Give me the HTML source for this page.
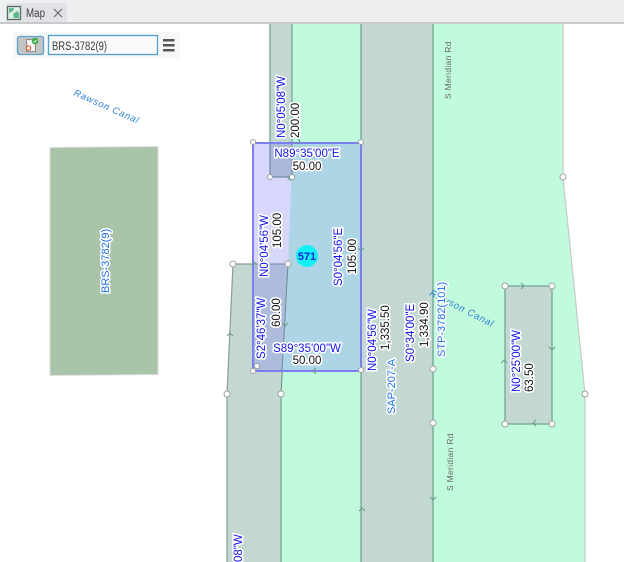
<!DOCTYPE html>
<html><head><meta charset="utf-8"><style>
html,body{margin:0;padding:0;background:#fff;width:624px;height:562px;overflow:hidden}
svg{display:block;filter:blur(.35px)}
text{font-family:"Liberation Sans",sans-serif}
.b{font-size:11.5px;fill:#1414f0;stroke:#fff;stroke-width:3.2px;paint-order:stroke;stroke-linejoin:round}
.k{font-size:11.5px;fill:#111;stroke:#fff;stroke-width:3.2px;paint-order:stroke;stroke-linejoin:round}
.c{font-size:11px;fill:#1f70ee;stroke:#fff;stroke-width:3px;paint-order:stroke;stroke-linejoin:round}
.r{font-size:9.500px;fill:#2f80d8;letter-spacing:.75px;font-style:italic}
.m{font-size:8.500px;fill:#666;letter-spacing:.3px}
.n{fill:#fff;stroke:#a0a0a0;stroke-width:1}
.a{fill:none;stroke:#5e9a84;stroke-width:.9}
</style></head><body>
<svg width="624" height="562" viewBox="0 0 624 562" xmlns="http://www.w3.org/2000/svg">
<rect width="624" height="562" fill="#fff"/>
<rect width="624" height="22" fill="#eeeff1"/>
<path d="M6 22V6q0-3 3-3h55q3 0 3 3v16z" fill="#e0e2e6"/>
<rect y="22" width="624" height="2" fill="#c9cacc"/>
<rect x="7.500" y="6.500" width="13" height="13" fill="#dcefe4" stroke="#5a6a6a" stroke-width="1.300"/>
<path d="M9 8h5l-1 3-4 2zM13 14l4-3 2 2v5h-5z" fill="#5fb98a"/>
<text x="26" y="17" style="font-size:11.500px;fill:#404040" textLength="19" lengthAdjust="spacingAndGlyphs">Map</text>
<path d="M54 9l8 8M62 9l-8 8" stroke="#666" stroke-width="1.100" fill="none"/>
<rect x="13" y="32" width="167" height="26" fill="#f6f7f7"/>
<rect x="17.500" y="36.500" width="26" height="18" rx="2" fill="#c4c4c4" stroke="#5ba3d0" stroke-width="1.300"/>
<path d="M26.500 39.500h9v12h-9z" fill="#f4f4f4" stroke="#777" stroke-width=".8"/>
<circle cx="35" cy="41" r="3.300" fill="#3fae49"/>
<path d="M33.500 41l1.200 1.200 1.800-2" stroke="#fff" fill="none" stroke-width=".8"/>
<circle cx="28.500" cy="48" r="2.200" fill="none" stroke="#d9603b" stroke-width="1.200"/>
<rect x="48.500" y="35.500" width="109" height="19" fill="#f8fafa" stroke="#4f9fd0" stroke-width="1.300"/>
<text x="52" y="50" style="font-size:11.500px;fill:#3a3a3a" textLength="55" lengthAdjust="spacingAndGlyphs">BRS-3782(9)</text>
<rect x="163" y="39" width="11.500" height="2.500" fill="#555"/><rect x="163" y="44" width="11.500" height="2.500" fill="#555"/><rect x="163" y="49" width="11.500" height="2.500" fill="#555"/>

<path d="M50 147.500L158 146.500V374.500L50 375.500Z" fill="#a9c4a9" stroke="#dcdcdc"/>
<path d="M292 24H563V177L585 394V562H281V394L288 264Z" fill="#c1fbdd"/>
<path d="M563 24V177L585 394V562" fill="none" stroke="#c8c8c8" stroke-width="1.200"/>
<rect x="270" y="24" width="22" height="153" fill="#c3d8d2"/>
<rect x="361" y="24" width="72" height="538" fill="#c3d8d2"/>
<path d="M233 264H288L281 394V562H227V394Z" fill="#c3d8d2"/>
<rect x="505" y="286" width="47" height="138" fill="#c3d8d2" stroke="#6d9f8c" stroke-width="1.200"/>
<path d="M270 24V177H292V24M361 24V562M433 24V562M281 394V562" fill="none" stroke="#6d9f8c" stroke-width="1.200"/>
<path d="M233 264L227 394V562" fill="none" stroke="#8c9c96" stroke-width="1.200"/>
<path d="M233 264H288L281 394" fill="none" stroke="#6d8a80" stroke-width="1"/>

<rect x="253" y="143" width="108" height="228" fill="#aed5e5"/>
<path d="M253 143H293L288 264L282 371H253Z" fill="#d6d7fb"/>
<path d="M253 264H288L282 371H253Z" fill="#adbcdc"/>
<path d="M270 143H292V177H270Z" fill="#aab8dc"/>
<path d="M270 143V177H292V143" fill="none" stroke="#5e7d90" stroke-width="1"/>
<path d="M253 264H288L282 371" fill="none" stroke="#6c8a98" stroke-width="1"/>
<rect x="253" y="143" width="108" height="228" fill="none" stroke="#7d7ff0" stroke-width="2"/>

<path class="a" d="M227 336l3-3 3 3M282 323l3 3 3-3M359 511l3-3 3 3M430 497l3 3 3-3M501 363l3-3 3 3M549 347l3 3 3-3M521 283l3 3-3 3M536 420l-3 3 3 3M297 138l3 3-3 3M291 175l-3 3 3 3M358 248l3 3 3-3M316 368l-3 3 3 3M252 260l3 3-3 3"/>

<g class="n">
<circle cx="253" cy="142" r="2.500"/><circle cx="361" cy="142" r="2.500"/><circle cx="270" cy="177" r="2.500"/><circle cx="292" cy="177" r="2.500"/>
<circle cx="233" cy="264" r="3"/><circle cx="288" cy="264" r="3"/><circle cx="257" cy="366" r="2.500"/><circle cx="253" cy="371" r="2.500"/><circle cx="361" cy="370" r="2.500"/>
<circle cx="227" cy="394" r="3"/><circle cx="281" cy="394" r="3"/><circle cx="433" cy="369" r="3"/><circle cx="433" cy="423" r="3"/>
<circle cx="505" cy="286" r="3"/><circle cx="552" cy="286" r="3"/><circle cx="505" cy="424" r="3"/><circle cx="552" cy="424" r="3"/>
<circle cx="563" cy="177" r="3"/><circle cx="585" cy="394" r="3"/>
</g>

<circle cx="307" cy="256" r="11" fill="#13f1f7"/>
<text x="307" y="260" text-anchor="middle" style="font-size:11px;font-weight:bold;fill:#0a2ad8">571</text>

<text class="b" transform="translate(285,138) rotate(-90)">N0°05'08"W</text>
<text class="k" transform="translate(299,138) rotate(-90)">200.00</text>
<text class="b" x="307" y="157" text-anchor="middle">N89°35'00"E</text>
<text class="k" x="307" y="170" text-anchor="middle">50.00</text>
<text class="b" transform="translate(268,277) rotate(-90)">N0°04'56"W</text>
<text class="k" transform="translate(281,248) rotate(-90)">105.00</text>
<text class="b" transform="translate(342,286) rotate(-90)">S0°04'56"E</text>
<text class="k" transform="translate(356,274) rotate(-90)">105.00</text>
<text class="b" transform="translate(265,359) rotate(-90)">S2°46'37"W</text>
<text class="k" transform="translate(280,327) rotate(-90)">60.00</text>
<text class="b" x="307" y="352" text-anchor="middle">S89°35'00"W</text>
<text class="k" x="307" y="364" text-anchor="middle">50.00</text>
<text class="b" transform="translate(376,371) rotate(-90)">N0°04'56"W</text>
<text class="k" transform="translate(389,350) rotate(-90)">1,335.50</text>
<text class="b" transform="translate(414,362) rotate(-90)">S0°34'00"E</text>
<text class="k" transform="translate(428,347) rotate(-90)">1,334.90</text>
<text class="b" transform="translate(520,392) rotate(-90)">N0°25'00"W</text>
<text class="k" transform="translate(533,392) rotate(-90)">63.50</text>
<text class="b" transform="translate(242,562) rotate(-90)">08"W</text>

<text class="c" transform="translate(109,293) rotate(-90)">BRS-3782(9)</text>
<text class="c" transform="translate(395,414) rotate(-90)">SAP-207-A</text>
<text class="r" transform="translate(73,95) rotate(24)">Rawson Canal</text>
<text class="r" transform="translate(429,295) rotate(27)">Rawson Canal</text>
<text class="c" transform="translate(445,357) rotate(-90)">STP-3782(101)</text>
<text class="m" transform="translate(451,99) rotate(-90)">S Meridian Rd</text>
<text class="m" transform="translate(453,491) rotate(-90)">S Meridian Rd</text>
</svg>
</body></html>
